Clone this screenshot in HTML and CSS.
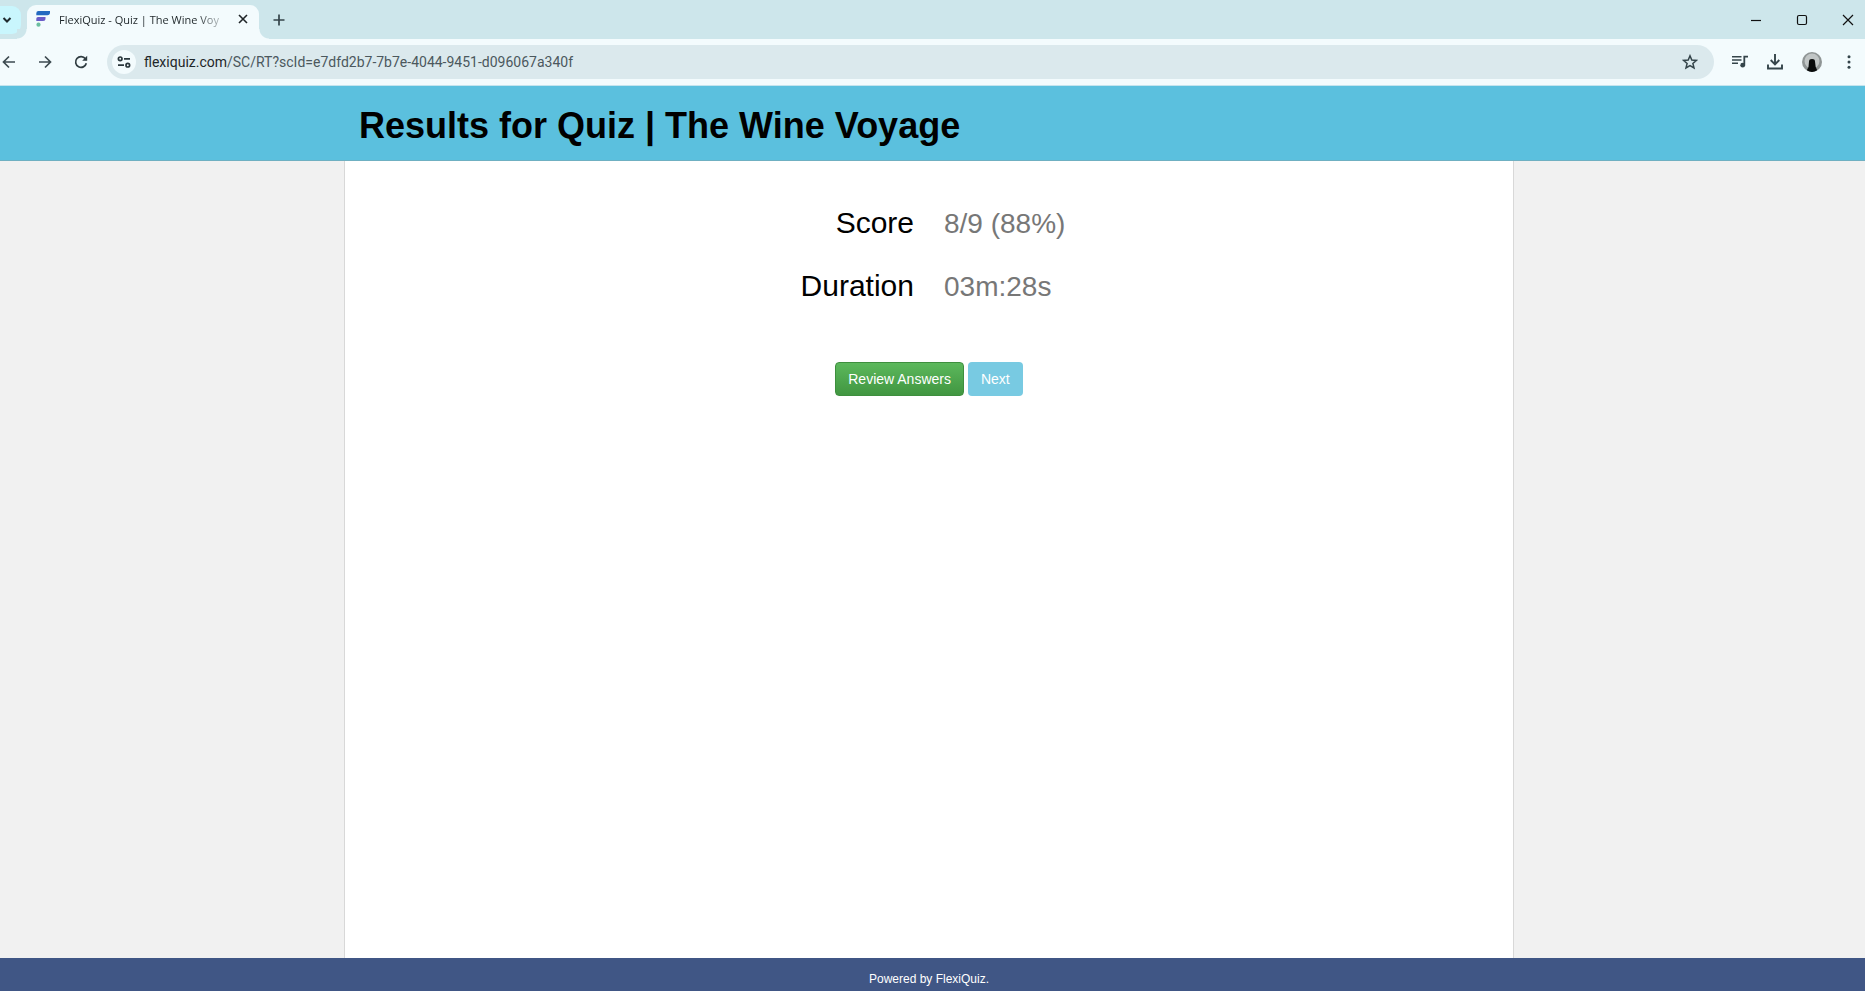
FILE: index.html
```html
<!DOCTYPE html>
<html lang="en">
<head>
<meta charset="utf-8">
<title>FlexiQuiz - Quiz | The Wine Voyage</title>
<link rel="stylesheet" href="styles.css">
</head>
<body>
<div class="browser">
  <div class="tab-strip">
    <button class="tab-search" aria-label="Search tabs"><svg width="10" height="10" viewBox="0 0 10 10"><path d="M1.5 3 5 6.500 8.500 3" fill="none" stroke="#1f2a2e" stroke-width="2"/></svg></button>
    <div class="tab">
      <svg class="favicon" width="14" height="16" viewBox="0 0 14 16"><path d="M2.500 0H14v1.500a2.700 2.700 0 0 1-2.700 2.700H.3V2.200A2.200 2.200 0 0 1 2.500 0z" fill="#2369c0"/><path d="M2 6h7.500v1.500a2.500 2.500 0 0 1-2.500 2.500H.3V7.700A1.700 1.700 0 0 1 2 6z" fill="#6a5cc8"/><circle cx="2.500" cy="13.700" r="2.100" fill="#6cbfa0"/></svg>
      <span class="tab-title">FlexiQuiz - Quiz | The Wine Voy</span>
      <button class="icon-button" aria-label="Close tab"><svg width="10" height="10" viewBox="0 0 10 10"><path d="M1 1l8 8M9 1L1 9" stroke="#1f2528" stroke-width="1.600"/></svg></button>
    </div>
    <button class="icon-button new-tab" aria-label="New tab"><svg width="12" height="12" viewBox="0 0 12 12"><path d="M6 .5v11M.5 6h11" stroke="#34444a" stroke-width="1.700"/></svg></button>
    <div class="window-controls">
      <button class="icon-button" aria-label="Minimize"><svg width="12" height="12" viewBox="0 0 12 12"><path d="M1 6.500h10" stroke="#111" stroke-width="1.200"/></svg></button>
      <button class="icon-button" aria-label="Maximize"><svg width="12" height="12" viewBox="0 0 12 12"><rect x="1.500" y="1.500" width="9" height="9" rx="1.500" fill="none" stroke="#111" stroke-width="1.200"/></svg></button>
      <button class="icon-button" aria-label="Close"><svg width="12" height="12" viewBox="0 0 12 12"><path d="M1 1l10 10M11 1L1 11" stroke="#111" stroke-width="1.200"/></svg></button>
    </div>
  </div>
  <div class="toolbar">
    <div class="nav-buttons">
      <button class="icon-button" aria-label="Back"><svg width="14" height="14" viewBox="0 0 14 14"><path d="M13 7H2M7 1.500 1.500 7 7 12.500" fill="none" stroke="#3c4a50" stroke-width="1.700"/></svg></button>
      <button class="icon-button" aria-label="Forward"><svg width="14" height="14" viewBox="0 0 14 14"><path d="M1 7h11M7 1.500 12.500 7 7 12.500" fill="none" stroke="#3c4a50" stroke-width="1.700"/></svg></button>
      <button class="icon-button" aria-label="Reload"><svg width="14" height="14" viewBox="0 0 14 14"><path d="M12.300 8.200A5.400 5.400 0 1 1 11.400 3.800L12.500 5" fill="none" stroke="#2f3c41" stroke-width="1.700"/><path d="M13.200.8v5H8.200z" fill="#2f3c41"/></svg></button>
    </div>
    <div class="address">
      <button class="site-info" aria-label="View site information"><svg width="14" height="14" viewBox="0 0 14 14"><g fill="none" stroke="#2a373c" stroke-width="1.700"><circle cx="3.200" cy="3.800" r="1.800"/><path d="M7 3.800h6M1 10.200h6"/><circle cx="10.800" cy="10.200" r="1.800"/></g></svg></button>
      <div class="url"><span class="url-host">flexiquiz.com</span>/SC/RT?scId=e7dfd2b7-7b7e-4044-9451-d096067a340f</div>
      <button class="icon-button" aria-label="Bookmark this tab"><svg width="16" height="16" viewBox="0 0 16 16"><path d="M8 1.800l1.800 4.200 4.600.4-3.500 3 1.100 4.500L8 11.500l-4 2.400 1.100-4.500-3.500-3 4.600-.4z" fill="none" stroke="#34444a" stroke-width="1.500"/></svg></button>
    </div>
    <div class="toolbar-actions">
      <button class="icon-button" aria-label="Media controls"><svg width="16" height="14" viewBox="0 0 16 14"><path d="M0 1.800h9.500M0 5h9.500M0 8.200h6" stroke="#34444a" stroke-width="1.600"/><path d="M12.300 10V1.700H16" fill="none" stroke="#34444a" stroke-width="1.800"/><circle cx="10.700" cy="10.200" r="2.400" fill="#34444a"/></svg></button>
      <button class="icon-button" aria-label="Downloads"><svg width="16" height="16" viewBox="0 0 16 16"><path d="M8 0v10M3.700 6 8 10.300 12.300 6M1 10.500v4h14v-4" fill="none" stroke="#34444a" stroke-width="1.900"/></svg></button>
      <button class="icon-button" aria-label="Profile"><svg width="20" height="20" viewBox="0 0 20 20"><circle cx="10" cy="10" r="10" fill="#8f9595"/><circle cx="10" cy="9" r="7.500" fill="#c0c5c5"/><path d="M7 9.500C7 7.800 8 7 10 7s3 .8 3 2.500l.7 5.500 1.500 3.300A10 10 0 0 1 4.800 18.300L6.500 15z" fill="#090b0b"/></svg></button>
      <button class="icon-button menu" aria-label="Menu"><svg width="4" height="14" viewBox="0 0 4 14"><g fill="#34444a"><circle cx="2" cy="1.700" r="1.500"/><circle cx="2" cy="7" r="1.500"/><circle cx="2" cy="12.300" r="1.500"/></g></svg></button>
    </div>
  </div>
</div>
<header class="page-header"><div class="container"><h1>Results for Quiz | The Wine Voyage</h1></div></header>
<main class="page-body">
  <div class="container panel">
    <dl class="results">
      <dt>Score</dt><dd>8/9 (88%)</dd>
      <dt>Duration</dt><dd>03m:28s</dd>
    </dl>
    <div class="actions">
      <button class="btn btn-review">Review Answers</button>
      <button class="btn btn-next">Next</button>
    </div>
  </div>
</main>
<footer class="page-footer">Powered by&nbsp;<a href="#">FlexiQuiz.</a></footer>
</body>
</html>
```
FILE: styles.css
```css
* { box-sizing: border-box; }
body {
  margin: 0;
  min-height: 100vh;
  display: flex;
  flex-direction: column;
  background: #f1f1f1;
  font-family: "Liberation Sans", Arial, sans-serif;
}
button { font: inherit; cursor: pointer; }
svg { display: block; }

.browser { font-family: "Open Sans", "Noto Sans", sans-serif; background: #f3fbfd; border-bottom: 1px solid #c4e4ee; }
.icon-button { display: flex; align-items: center; justify-content: center; padding: 0; border: 0; background: none; }
.tab-strip { display: flex; align-items: flex-end; height: 39px; background: #cde6eb; }
.tab-search {
  align-self: center;
  width: 21px;
  height: 28px;
  margin-right: 6px;
  padding: 0 0 0 2px;
  border: 0;
  border-radius: 0 9px 9px 0;
  background: #c9f6fd;
}
.tab {
  position: relative;
  display: flex;
  align-items: center;
  width: 232px;
  height: 34px;
  padding: 0 11px 6px 9px;
  border-radius: 9px 9px 0 0;
  background: #f3fbfd;
}
.tab::before, .tab::after { content: ""; position: absolute; bottom: 0; width: 10px; height: 10px; }
.tab::before { left: -10px; background: radial-gradient(circle at 0 0, #cde6eb 9px, #f3fbfd 10px); }
.tab::after { right: -10px; background: radial-gradient(circle at 100% 0, #cde6eb 9px, #f3fbfd 10px); }
.favicon { flex: none; }
.tab-title {
  flex: 1;
  margin: 0 8px 0 9px;
  white-space: nowrap;
  font-size: 11px;
  color: #1e2629;
  mask-image: linear-gradient(to right, #000 80%, transparent);
}
.new-tab { width: 40px; height: 38px; }
.window-controls { display: flex; gap: 34px; margin: 0 11px 0 auto; height: 38px; }
.toolbar { display: flex; align-items: center; height: 46px; padding-right: 14px; }
.nav-buttons { display: flex; gap: 22px; padding: 0 19px 0 2px; }
.address {
  flex: 1;
  display: flex;
  align-items: center;
  height: 34px;
  padding: 0 16px 0 5px;
  border-radius: 17px;
  background: #dbe9ed;
}
.site-info {
  display: flex;
  align-items: center;
  justify-content: center;
  width: 24px;
  height: 24px;
  padding: 0;
  border: 0;
  border-radius: 50%;
  background: #f3fbfd;
}
.url { flex: 1; margin-left: 8px; font-family: Roboto, "Open Sans", sans-serif; font-size: 14px; line-height: 20px; color: #4b585d; }
.url-host { color: #1e2629; }
.toolbar-actions { display: flex; align-items: center; gap: 19px; margin-left: 18px; }
.menu { margin-left: 6px; }

.container { width: 100%; max-width: 1170px; margin: 0 auto; padding: 0 15px; }
.page-header, .page-body { padding-right: 7px; }
.page-header { background: #5bc0de; border-bottom: 1px solid #6fb0c2; }
h1 { margin: 0; padding: 19px 0 14px; font-size: 36px; line-height: 41px; font-weight: 700; color: #000; }
.page-body { flex: 1; display: flex; }
.panel { border: solid #d8d8d8; border-width: 0 1px; background: #fff; }
.results {
  display: grid;
  grid-template-columns: 1fr 1fr;
  align-items: baseline;
  column-gap: 30px;
  row-gap: 22px;
  margin: 42px 0 0;
  line-height: 40px;
}
.results dt { text-align: right; font-size: 30px; color: #000; }
.results dd { margin: 0; font-size: 28px; color: #777; }
.actions { display: flex; justify-content: center; gap: 4px; margin-top: 55px; }
.btn {
  height: 34px;
  padding: 0 12px;
  border: 1px solid transparent;
  border-radius: 4px;
  font-size: 14px;
  color: #fff;
}
.btn-review { border-color: #3e8f3e; background: linear-gradient(#5cb85c, #419641); }
.btn-next { background: #78cae2; }
.page-footer {
  display: flex;
  justify-content: center;
  align-items: center;
  height: 33px;
  padding: 9px 7px 0 0;
  background: #405685;
  font-size: 12px;
  color: #fff;
}
.page-footer a { color: inherit; text-decoration: none; }
```
